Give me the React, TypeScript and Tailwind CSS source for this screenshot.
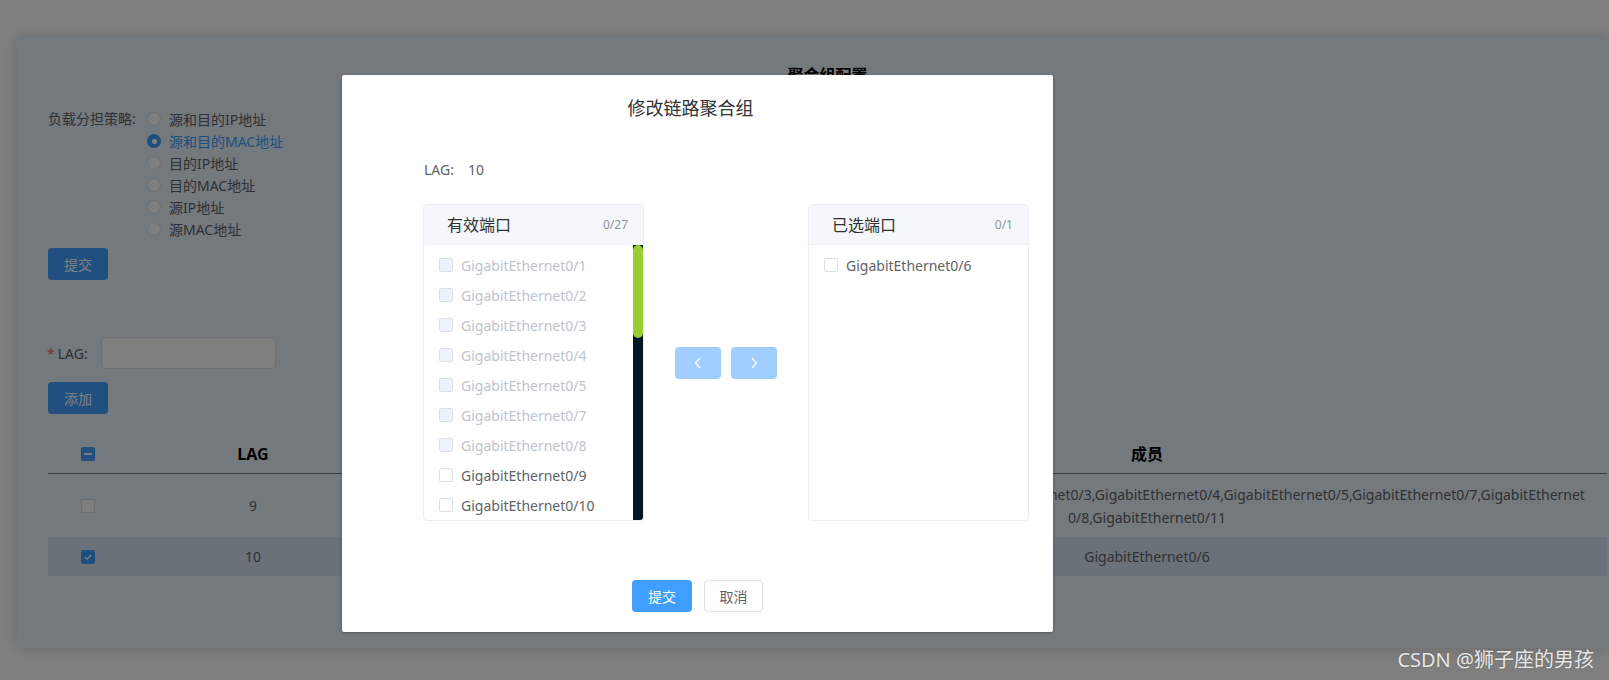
import React from "react";

const FONT = "font-['Noto_Sans','Noto_Sans_CJK_SC',sans-serif]";

function Radio({ label, checked }: { label: string; checked?: boolean }) {
  return (
    <div className="h-[22px] flex items-center gap-[8px]">
      {checked ? (
        <span className="w-[14px] h-[14px] rounded-full bg-[#409eff] flex items-center justify-center">
          <span className="w-[5px] h-[5px] rounded-full bg-white" />
        </span>
      ) : (
        <span className="w-[14px] h-[14px] rounded-full bg-white border border-[#dcdfe6]" />
      )}
      <span className={checked ? "text-[14px] text-[#409eff]" : "text-[14px] text-[#606266]"}>{label}</span>
    </div>
  );
}

function Check({ state }: { state: "none" | "checked" | "indeterminate" | "disabled" }) {
  if (state === "checked") {
    return (
      <span className="w-[14px] h-[14px] rounded-[2px] bg-[#409eff] flex items-center justify-center">
        <svg width="10" height="10" viewBox="0 0 10 10">
          <path d="M2 5.2 L4.2 7.2 L8 3" stroke="white" strokeWidth="1.3" fill="none" />
        </svg>
      </span>
    );
  }
  if (state === "indeterminate") {
    return (
      <span className="w-[14px] h-[14px] rounded-[2px] bg-[#409eff] flex items-center justify-center">
        <span className="w-[8px] h-[2px] bg-white" />
      </span>
    );
  }
  if (state === "disabled") {
    return <span className="w-[14px] h-[14px] rounded-[2px] bg-[#edf2fc] border border-[#dcdfe6] shrink-0" />;
  }
  return <span className="w-[14px] h-[14px] rounded-[2px] bg-white border border-[#dcdfe6] shrink-0" />;
}

function Item({ label, disabled }: { label: string; disabled?: boolean }) {
  return (
    <div className="h-[30px] flex items-center gap-[8px] pl-[15px] whitespace-nowrap">
      <Check state={disabled ? "disabled" : "none"} />
      <span className={disabled ? "text-[14px] text-[#c0c4cc]" : "text-[14px] text-[#606266]"}>{label}</span>
    </div>
  );
}

function PanelHeader({ title, count }: { title: string; count: string }) {
  return (
    <div className="h-[40px] shrink-0 bg-[#f5f7fa] border-b border-[#ebeef5] flex items-center justify-between pl-[23px] pr-[15px]">
      <span className="text-[16px] text-[#303133] leading-[22px]">{title}</span>
      <span className="text-[12px] text-[#909399]">{count}</span>
    </div>
  );
}

export default function App() {
  const left = [
    { l: "GigabitEthernet0/1", d: true },
    { l: "GigabitEthernet0/2", d: true },
    { l: "GigabitEthernet0/3", d: true },
    { l: "GigabitEthernet0/4", d: true },
    { l: "GigabitEthernet0/5", d: true },
    { l: "GigabitEthernet0/7", d: true },
    { l: "GigabitEthernet0/8", d: true },
    { l: "GigabitEthernet0/9", d: false },
    { l: "GigabitEthernet0/10", d: false },
  ];

  return (
    <div className={`relative w-[1609px] h-[680px] overflow-hidden bg-white ${FONT}`}>
      {/* background page */}
      <div className="pt-[37px] pl-[17px]">
        <div className="h-[611px] bg-[#e8f2fc] shadow-[0_0_14px_rgba(0,0,0,0.18)] pl-[31px] pr-[2px]">
          <div className="pt-[27px] text-center text-[16px] font-bold leading-[22px] text-black">聚合组配置</div>

          <div className="mt-[22px] flex">
            <div className="w-[99px] h-[22px] leading-[22px] text-[14px] text-[#606266]">负载分担策略:</div>
            <div className="flex flex-col">
              <Radio label="源和目的IP地址" />
              <Radio label="源和目的MAC地址" checked />
              <Radio label="目的IP地址" />
              <Radio label="目的MAC地址" />
              <Radio label="源IP地址" />
              <Radio label="源MAC地址" />
            </div>
          </div>

          <button className="mt-[8px] w-[60px] h-[32px] rounded-[4px] bg-[#409eff] text-white text-[14px] flex items-center justify-center">
            提交
          </button>

          <div className="mt-[57px] h-[32px] flex items-center">
            <div className="w-[53px] flex items-center text-[14px] text-[#606266]">
              <span className="text-[#f56c6c] mr-[3px] ml-[-1px]">*</span>
              <span>LAG:</span>
            </div>
            <div className="w-[175px] h-[32px] rounded-[4px] bg-white border border-[#dcdfe6]" />
          </div>

          <button className="mt-[13px] w-[60px] h-[32px] rounded-[4px] bg-[#409eff] text-white text-[14px] flex items-center justify-center">
            添加
          </button>

          <div className="mt-[21px]">
            <div className="h-[39px] flex items-center border-b border-[#64788c] text-[16px] font-bold text-black">
              <div className="w-[80px] flex justify-center">
                <Check state="indeterminate" />
              </div>
              <div className="w-[250px] text-center">LAG</div>
              <div className="w-[309px]" />
              <div className="flex-1 text-center">成员</div>
            </div>
            <div className="h-[63px] flex items-center text-[14px] text-[#606266]">
              <div className="w-[80px] flex justify-center">
                <Check state="none" />
              </div>
              <div className="w-[250px] text-center">9</div>
              <div className="w-[309px]" />
              <div className="flex-1 text-center leading-[23px] whitespace-nowrap">
                <div>GigabitEthernet0/1,GigabitEthernet0/2,GigabitEthernet0/3,GigabitEthernet0/4,GigabitEthernet0/5,GigabitEthernet0/7,GigabitEthernet</div>
                <div>0/8,GigabitEthernet0/11</div>
              </div>
            </div>
            <div className="h-[39px] flex items-center bg-[#d5e3f2] text-[14px] text-[#606266]">
              <div className="w-[80px] flex justify-center">
                <Check state="checked" />
              </div>
              <div className="w-[250px] text-center">10</div>
              <div className="w-[309px]" />
              <div className="flex-1 text-center">GigabitEthernet0/6</div>
            </div>
          </div>
        </div>
      </div>

      {/* overlay */}
      <div className="absolute inset-0 bg-black/50" />

      {/* dialog */}
      <div className="absolute left-[342px] top-[75px] w-[711px] h-[557px] bg-white rounded-[2px] shadow-[0_1px_3px_rgba(0,0,0,0.3)] flex flex-col">
        <div className="pt-[21px] pr-[14px] text-center text-[18px] leading-[24px] text-[#303133]">修改链路聚合组</div>

        <div className="mt-[38px] pl-[82px] h-[22px] flex items-center text-[14px] text-[#606266]">
          <span>LAG:</span>
          <span className="ml-[14px]">10</span>
        </div>

        <div className="mt-[24px] pl-[81px] flex items-center">
          <div className="w-[221px] h-[317px] border border-[#ebeef5] rounded-[4px] bg-white overflow-hidden flex flex-col">
            <PanelHeader title="有效端口" count="0/27" />
            <div className="flex-1 min-h-0 flex">
              <div className="flex-1 overflow-hidden pt-[5px]">
                {left.map((it) => (
                  <Item key={it.l} label={it.l} disabled={it.d} />
                ))}
              </div>
              <div className="w-[10px] bg-[#031527]">
                <div className="h-[93px] rounded-full bg-[#9acd32]" />
              </div>
            </div>
          </div>

          <div className="mx-[31px] flex gap-[10px]">
            <button className="w-[46px] h-[32px] rounded-[4px] bg-[#a0cfff] flex items-center justify-center">
              <svg width="8" height="12" viewBox="0 0 8 12">
                <path d="M6 1 L1.5 6 L6 11" stroke="white" strokeWidth="1.2" fill="none" />
              </svg>
            </button>
            <button className="w-[46px] h-[32px] rounded-[4px] bg-[#a0cfff] flex items-center justify-center">
              <svg width="8" height="12" viewBox="0 0 8 12">
                <path d="M2 1 L6.5 6 L2 11" stroke="white" strokeWidth="1.2" fill="none" />
              </svg>
            </button>
          </div>

          <div className="w-[221px] h-[317px] border border-[#ebeef5] rounded-[4px] bg-white overflow-hidden flex flex-col">
            <PanelHeader title="已选端口" count="0/1" />
            <div className="flex-1 pt-[5px]">
              <Item label="GigabitEthernet0/6" />
            </div>
          </div>
        </div>

        <div className="mt-[59px] flex justify-center gap-[12px]">
          <button className="w-[60px] h-[32px] rounded-[4px] bg-[#409eff] text-white text-[14px] flex items-center justify-center">
            提交
          </button>
          <button className="w-[59px] h-[32px] rounded-[4px] bg-white border border-[#dcdfe6] text-[#606266] text-[14px] flex items-center justify-center">
            取消
          </button>
        </div>
      </div>

      {/* watermark */}
      <div className="absolute right-[15px] bottom-[7px] text-[20px] leading-[26px] text-white/85 [text-shadow:0_0_2px_rgba(0,0,0,0.3)] whitespace-nowrap">
        CSDN @狮子座的男孩
      </div>
    </div>
  );
}
